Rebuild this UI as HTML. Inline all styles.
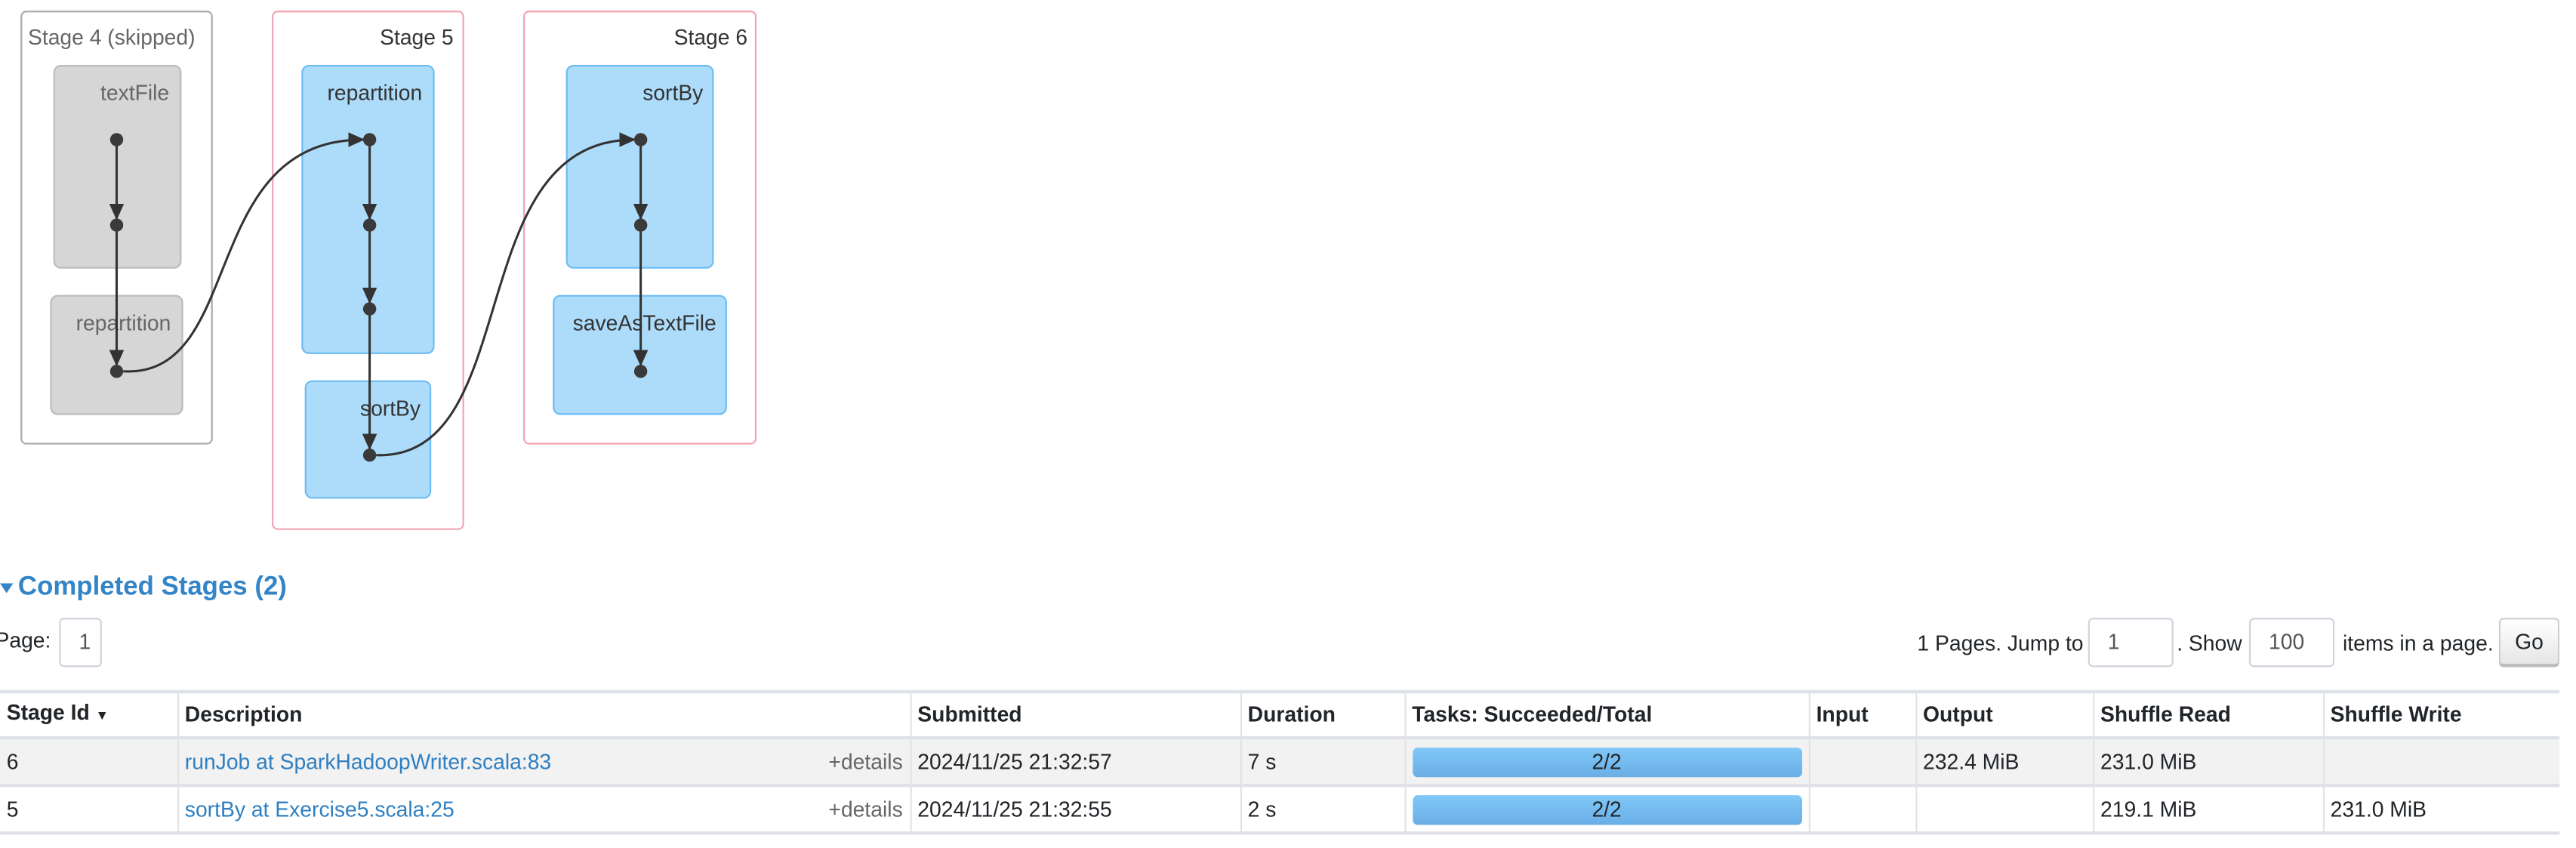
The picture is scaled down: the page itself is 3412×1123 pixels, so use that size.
<!DOCTYPE html>
<html><head><meta charset="utf-8"><style>
html,body{margin:0;padding:0;background:#fff;overflow:hidden;width:3412px;height:1122px}
#w{position:absolute;left:0;top:0;width:1568px;height:516px;transform:scale(2.176);transform-origin:0 0;font-family:"Liberation Sans",sans-serif;font-size:13px;color:#212529}
.a{position:absolute}
h4{position:absolute;left:0;top:349px;margin:0;font-size:16px;font-weight:bold;color:#3385c8}
.inp{position:absolute;border:1px solid #ced4da;border-radius:3px;height:30px;box-sizing:border-box;line-height:28px;padding-left:11px;color:#555;font-size:13px}
table{position:absolute;left:0;top:420px;width:1558px;border-collapse:collapse;font-size:13px}
td,th{border-left:1px solid #e3e3e3;height:27px;padding:0 4px;text-align:left;white-space:nowrap;line-height:16px}
th{border-top:2px solid #dee2e6;border-bottom:2px solid #dee2e6;height:26px;font-weight:bold}
tr.r td{border-bottom:2px solid #dee2e6}
tr.g td{background:#f2f2f2}
td:first-child,th:first-child{border-left:none}
a{color:#2f7fc1;text-decoration:none}
.pb{height:18px;border-radius:3px;background:linear-gradient(#80c8f8,#6aaee6);text-align:center;line-height:18px;color:#212529}
</style></head><body><div id="w">
<svg class="a" style="left:0;top:0" width="470" height="330" font-family="Liberation Sans, sans-serif" font-size="13">
<defs><marker id="m" markerWidth="10" markerHeight="10" refX="9" refY="4.5" orient="auto" markerUnits="userSpaceOnUse"><path d="M0,0L10,4.5L0,9z" fill="#333"/></marker></defs>
<rect x="13" y="7" width="116" height="263" rx="3" fill="#fff" stroke="#aaa"/>
<text x="17" y="27" fill="#666">Stage 4 (skipped)</text>
<rect x="33" y="40" width="77" height="123" rx="4" fill="#d6d6d6" stroke="#bbb"/>
<text x="103" y="61" text-anchor="end" fill="#666">textFile</text>
<rect x="31" y="180" width="80" height="72" rx="4" fill="#d6d6d6" stroke="#bbb"/>
<text x="104" y="201" text-anchor="end" fill="#666">repartition</text>
<rect x="166" y="7" width="116" height="315" rx="3" fill="#fff" stroke="#f0a3b3"/>
<text x="276" y="27" text-anchor="end" fill="#333">Stage 5</text>
<rect x="184" y="40" width="80" height="175" rx="4" fill="#addcfb" stroke="#6cbcf2"/>
<text x="257" y="61" text-anchor="end" fill="#333">repartition</text>
<rect x="186" y="232" width="76" height="71" rx="4" fill="#addcfb" stroke="#6cbcf2"/>
<text x="256" y="253" text-anchor="end" fill="#333">sortBy</text>
<rect x="319" y="7" width="141" height="263" rx="3" fill="#fff" stroke="#f0a3b3"/>
<text x="455" y="27" text-anchor="end" fill="#333">Stage 6</text>
<rect x="345" y="40" width="89" height="123" rx="4" fill="#addcfb" stroke="#6cbcf2"/>
<text x="428" y="61" text-anchor="end" fill="#333">sortBy</text>
<rect x="337" y="180" width="105" height="72" rx="4" fill="#addcfb" stroke="#6cbcf2"/>
<text x="436" y="201" text-anchor="end" fill="#333">saveAsTextFile</text>
<g stroke="#333" stroke-width="1.4" fill="none" marker-end="url(#m)">
<path d="M71,85V133"/><path d="M71,137V222"/>
<path d="M225,85V133"/><path d="M225,137V184"/><path d="M225,188V273"/>
<path d="M390,85V133"/><path d="M390,137V222"/>
<path d="M75,226C150,230 120,85 221,85"/>
<path d="M229,277C320,280 280,85 386,85"/>
</g>
<g fill="#3a3a3a"><circle cx="71" cy="85" r="4"/><circle cx="71" cy="137" r="4"/><circle cx="71" cy="226" r="4"/>
<circle cx="225" cy="85" r="4"/><circle cx="225" cy="137" r="4"/><circle cx="225" cy="188" r="4"/><circle cx="225" cy="277" r="4"/>
<circle cx="390" cy="85" r="4"/><circle cx="390" cy="137" r="4"/><circle cx="390" cy="226" r="4"/></g>
</svg>
<div class="a" style="left:0;top:355px;width:0;height:0;border-left:4px solid transparent;border-right:4px solid transparent;border-top:6px solid #3385c8"></div>
<h4 style="left:11px">Completed Stages (2)</h4>
<div class="a" style="left:-3px;top:382px">Page:</div>
<div class="inp" style="left:36px;top:376px;width:26px">1</div>
<div class="a" style="left:1167px;top:384px">1 Pages. Jump to</div>
<div class="inp" style="left:1271px;top:376px;width:52px">1</div>
<div class="a" style="left:1325px;top:384px">. Show</div>
<div class="inp" style="left:1369px;top:376px;width:52px">100</div>
<div class="a" style="left:1426px;top:384px">items in a page.</div>
<div class="a" style="left:1521px;top:376px;width:37px;height:30px;box-sizing:border-box;border:1px solid #ccc;border-bottom:2px solid #bbb;border-radius:3px;background:linear-gradient(#fff,#e6e6e6);text-align:center;line-height:27px">Go</div>
<table>
<colgroup><col style="width:108px"><col style="width:446px"><col style="width:201px"><col style="width:100px"><col style="width:246px"><col style="width:65px"><col style="width:108px"><col style="width:140px"><col style="width:144px"></colgroup>
<tr><th>Stage Id <span style="font-size:8px">▼</span></th><th>Description</th><th>Submitted</th><th>Duration</th><th>Tasks: Succeeded/Total</th><th>Input</th><th>Output</th><th>Shuffle Read</th><th>Shuffle Write</th></tr>
<tr class="r g"><td>6</td><td><a>runJob at SparkHadoopWriter.scala:83</a><span style="float:right;color:#666">+details</span></td><td>2024/11/25 21:32:57</td><td>7 s</td><td><div class="pb">2/2</div></td><td></td><td>232.4 MiB</td><td>231.0 MiB</td><td></td></tr>
<tr class="r"><td>5</td><td><a>sortBy at Exercise5.scala:25</a><span style="float:right;color:#666">+details</span></td><td>2024/11/25 21:32:55</td><td>2 s</td><td><div class="pb">2/2</div></td><td></td><td></td><td>219.1 MiB</td><td>231.0 MiB</td></tr>
</table>
</div></body></html>
